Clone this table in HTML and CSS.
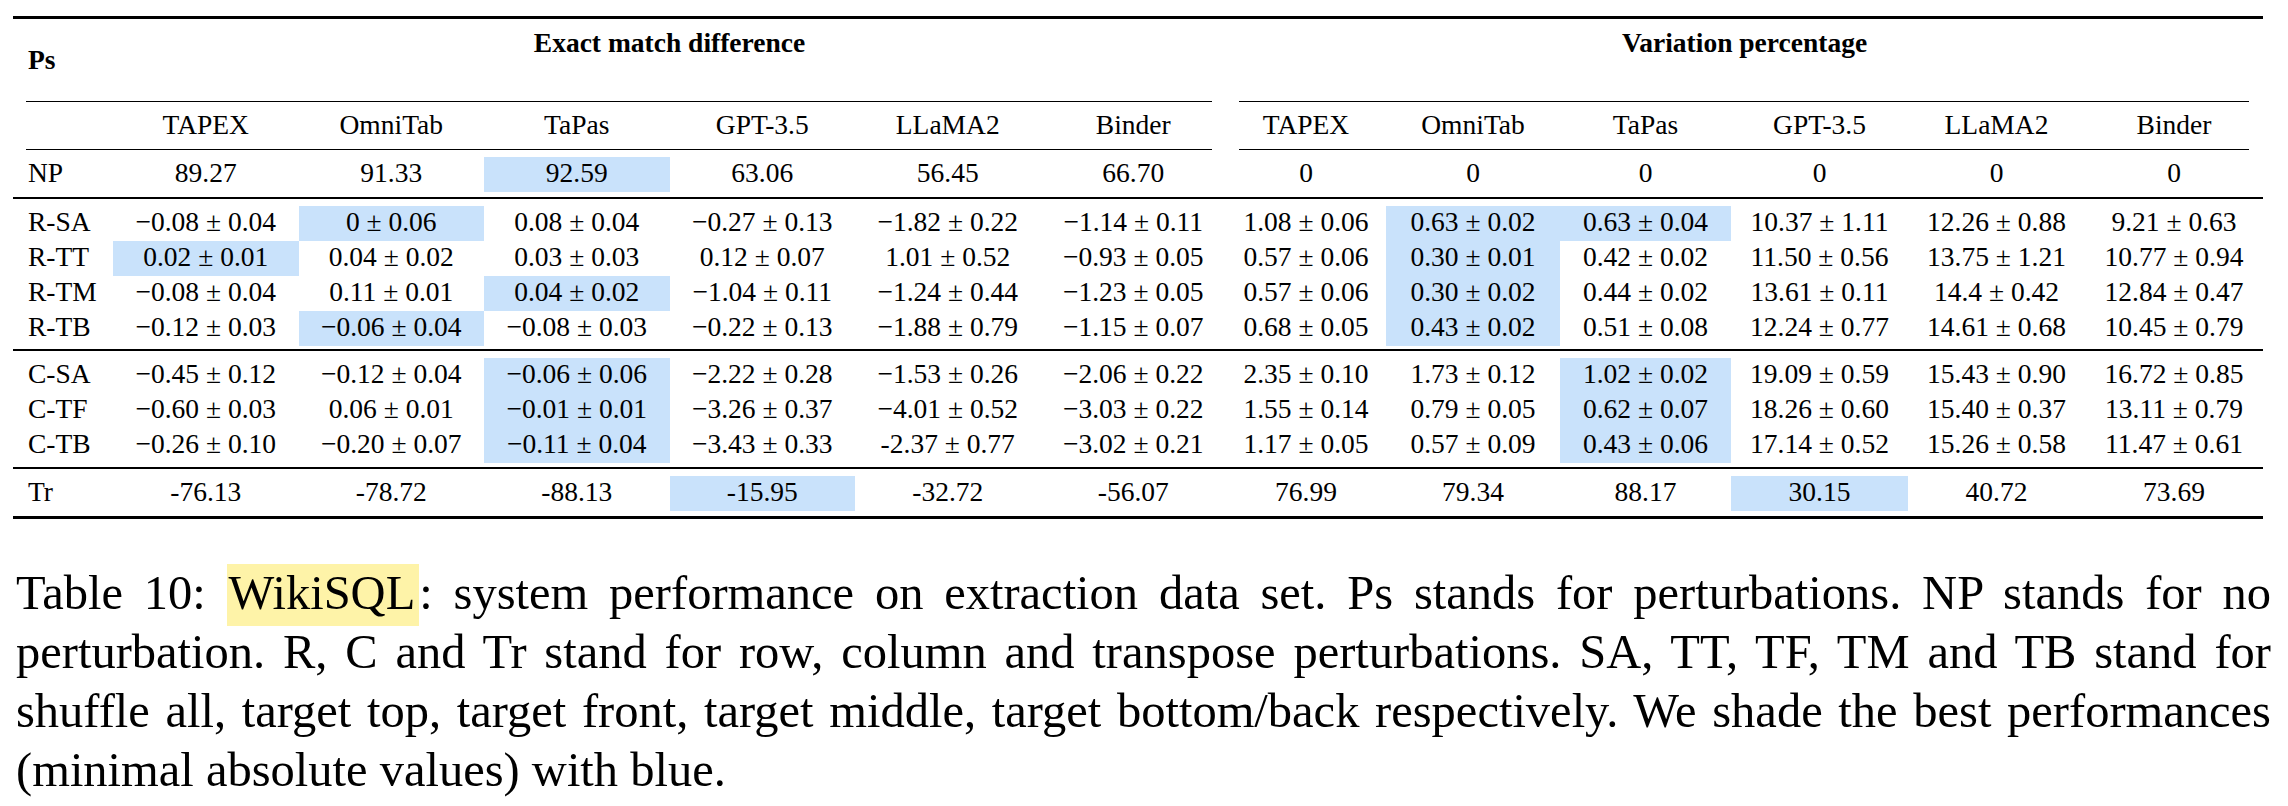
FILE: index.html
```html
<!DOCTYPE html>
<html>
<head>
<meta charset="utf-8">
<title>Table 10: WikiSQL</title>
<link rel="stylesheet" href="styles.css">
</head>
<body>
<div class="page">
  <div class="tbl">
    <div class="toprule"></div>

    <div class="h1 ps">Ps</div>
    <div class="h1 grp">Exact match difference</div>
    <div class="h1 grp">Variation percentage</div>

    <div class="cmid a"></div><div class="cmid b"></div>

    <div class="h2"></div>
    <div class="h2">TAPEX</div><div class="h2">OmniTab</div><div class="h2">TaPas</div><div class="h2">GPT-3.5</div><div class="h2">LLaMA2</div><div class="h2">Binder</div>
    <div class="h2">TAPEX</div><div class="h2">OmniTab</div><div class="h2">TaPas</div><div class="h2">GPT-3.5</div><div class="h2">LLaMA2</div><div class="h2">Binder</div>

    <div class="cmid a sp"></div><div class="cmid b sp"></div>

    <div class="lab">NP</div>
    <div class="c">89.27</div><div class="c">91.33</div><div class="c hl">92.59</div><div class="c">63.06</div><div class="c">56.45</div><div class="c">66.70</div>
    <div class="c">0</div><div class="c">0</div><div class="c">0</div><div class="c">0</div><div class="c">0</div><div class="c">0</div>

    <div class="midrule m1"></div>

    <div class="lab">R-SA</div>
    <div class="c">−0.08 ± 0.04</div><div class="c hl">0 ± 0.06</div><div class="c">0.08 ± 0.04</div><div class="c">−0.27 ± 0.13</div><div class="c">−1.82 ± 0.22</div><div class="c">−1.14 ± 0.11</div>
    <div class="c">1.08 ± 0.06</div><div class="c hl">0.63 ± 0.02</div><div class="c hl">0.63 ± 0.04</div><div class="c">10.37 ± 1.11</div><div class="c">12.26 ± 0.88</div><div class="c">9.21 ± 0.63</div>

    <div class="lab">R-TT</div>
    <div class="c hl">0.02 ± 0.01</div><div class="c">0.04 ± 0.02</div><div class="c">0.03 ± 0.03</div><div class="c">0.12 ± 0.07</div><div class="c">1.01 ± 0.52</div><div class="c">−0.93 ± 0.05</div>
    <div class="c">0.57 ± 0.06</div><div class="c hl">0.30 ± 0.01</div><div class="c">0.42 ± 0.02</div><div class="c">11.50 ± 0.56</div><div class="c">13.75 ± 1.21</div><div class="c">10.77 ± 0.94</div>

    <div class="lab">R-TM</div>
    <div class="c">−0.08 ± 0.04</div><div class="c">0.11 ± 0.01</div><div class="c hl">0.04 ± 0.02</div><div class="c">−1.04 ± 0.11</div><div class="c">−1.24 ± 0.44</div><div class="c">−1.23 ± 0.05</div>
    <div class="c">0.57 ± 0.06</div><div class="c hl">0.30 ± 0.02</div><div class="c">0.44 ± 0.02</div><div class="c">13.61 ± 0.11</div><div class="c">14.4 ± 0.42</div><div class="c">12.84 ± 0.47</div>

    <div class="lab">R-TB</div>
    <div class="c">−0.12 ± 0.03</div><div class="c hl">−0.06 ± 0.04</div><div class="c">−0.08 ± 0.03</div><div class="c">−0.22 ± 0.13</div><div class="c">−1.88 ± 0.79</div><div class="c">−1.15 ± 0.07</div>
    <div class="c">0.68 ± 0.05</div><div class="c hl">0.43 ± 0.02</div><div class="c">0.51 ± 0.08</div><div class="c">12.24 ± 0.77</div><div class="c">14.61 ± 0.68</div><div class="c">10.45 ± 0.79</div>

    <div class="midrule m2"></div>

    <div class="lab">C-SA</div>
    <div class="c">−0.45 ± 0.12</div><div class="c">−0.12 ± 0.04</div><div class="c hl">−0.06 ± 0.06</div><div class="c">−2.22 ± 0.28</div><div class="c">−1.53 ± 0.26</div><div class="c">−2.06 ± 0.22</div>
    <div class="c">2.35 ± 0.10</div><div class="c">1.73 ± 0.12</div><div class="c hl">1.02 ± 0.02</div><div class="c">19.09 ± 0.59</div><div class="c">15.43 ± 0.90</div><div class="c">16.72 ± 0.85</div>

    <div class="lab">C-TF</div>
    <div class="c">−0.60 ± 0.03</div><div class="c">0.06 ± 0.01</div><div class="c hl">−0.01 ± 0.01</div><div class="c">−3.26 ± 0.37</div><div class="c">−4.01 ± 0.52</div><div class="c">−3.03 ± 0.22</div>
    <div class="c">1.55 ± 0.14</div><div class="c">0.79 ± 0.05</div><div class="c hl">0.62 ± 0.07</div><div class="c">18.26 ± 0.60</div><div class="c">15.40 ± 0.37</div><div class="c">13.11 ± 0.79</div>

    <div class="lab">C-TB</div>
    <div class="c">−0.26 ± 0.10</div><div class="c">−0.20 ± 0.07</div><div class="c hl">−0.11 ± 0.04</div><div class="c">−3.43 ± 0.33</div><div class="c">-2.37 ± 0.77</div><div class="c">−3.02 ± 0.21</div>
    <div class="c">1.17 ± 0.05</div><div class="c">0.57 ± 0.09</div><div class="c hl">0.43 ± 0.06</div><div class="c">17.14 ± 0.52</div><div class="c">15.26 ± 0.58</div><div class="c">11.47 ± 0.61</div>

    <div class="midrule m3"></div>

    <div class="lab">Tr</div>
    <div class="c">-76.13</div><div class="c">-78.72</div><div class="c">-88.13</div><div class="c hl">-15.95</div><div class="c">-32.72</div><div class="c">-56.07</div>
    <div class="c">76.99</div><div class="c">79.34</div><div class="c">88.17</div><div class="c hl">30.15</div><div class="c">40.72</div><div class="c">73.69</div>

    <div class="bottomrule"></div>
  </div>

  <p class="caption">
    <span class="ln">Table 10: <span class="mark">WikiSQL</span>: system performance on extraction data set. Ps stands for perturbations. NP stands for no</span>
    <span class="ln">perturbation. R, C and Tr stand for row, column and transpose perturbations. SA, TT, TF, TM and TB stand for</span>
    <span class="ln">shuffle all, target top, target front, target middle, target bottom/back respectively. We shade the best performances</span>
    <span class="ln last">(minimal absolute values) with blue.</span>
  </p>
</div>
</body>
</html>
```

FILE: styles.css
```css
* {
  box-sizing: border-box;
}

html,
body {
  margin: 0;
  background: #ffffff;
}

body {
  font-family: "Liberation Serif", "Times New Roman", serif;
  color: #000000;
}

.page {
  padding: 16px 0 0 13px;
}

.tbl {
  display: grid;
  grid-template-columns: 100px repeat(6, 185.5px) 160px 174px 171px 177px 177px 178px;
  width: 2250px;
  font-size: 27.5px;
}

.toprule,
.bottomrule {
  grid-column: 1 / -1;
  height: 3px;
  background: #000000;
}

.bottomrule {
  margin-top: 5px;
}

.h1 {
  height: 82px;
  line-height: 32px;
  font-weight: bold;
}

.ps {
  padding: 25px 0 0 15px;
}

.grp {
  grid-column: span 6;
  text-align: center;
  padding-top: 8px;
}

.cmid {
  height: 1px;
  background: #000000;
  margin: 0 14px 0 13px;
}

.cmid.a {
  grid-column: span 7;
}

.cmid.b {
  grid-column: span 6;
}

.cmid.sp {
  margin-bottom: 7px;
}

.h2 {
  height: 47px;
  line-height: 32px;
  padding-top: 7px;
  text-align: center;
  white-space: nowrap;
}

.lab {
  height: 35px;
  line-height: 32px;
  padding-left: 15px;
  white-space: nowrap;
}

.c {
  height: 35px;
  line-height: 32px;
  text-align: center;
  white-space: nowrap;
}

.hl {
  background: #c9e2fb;
}

.midrule {
  grid-column: 1 / -1;
  height: 2px;
  background: #000000;
}

.m1 {
  margin: 5px 0 7px;
}

.m2 {
  margin: 3px 0 7px;
}

.m3 {
  margin: 4px 0 7px;
}

.caption {
  margin: 44px 0 0 3px;
  width: 2255px;
  font-size: 48.5px;
  line-height: 59px;
}

.ln {
  display: block;
  text-align: justify;
  text-align-last: justify;
}

.ln.last {
  text-align-last: left;
}

.mark {
  background: #fef3a8;
  padding: 2px 4px 7px 2px;
}
```
